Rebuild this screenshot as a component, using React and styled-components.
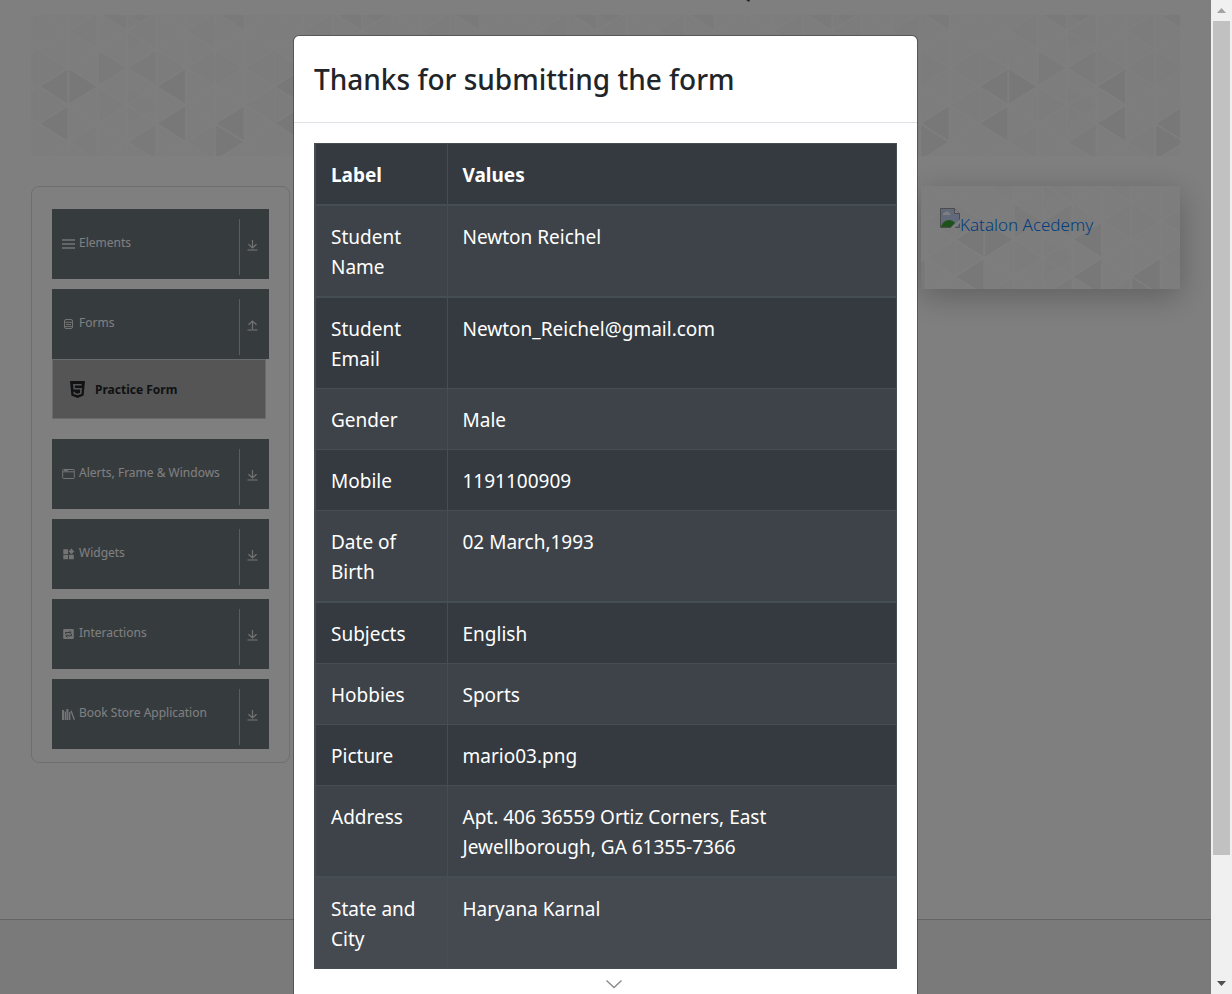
import React from "react";
import styled, { createGlobalStyle } from "styled-components";

const Global = createGlobalStyle`
  *, *::before, *::after { box-sizing: border-box; }
  html, body { margin: 0; }
  body { font-family: "Noto Sans", "Open Sans", sans-serif; font-size: 19px; line-height: 30px; color: #212529; overflow: hidden; }
`;

const Screen = styled.div`
  position: relative;
  display: flex;
  height: 100vh;
  overflow: hidden;
`;
const Viewport = styled.div`
  position: relative;
  flex: 1;
  min-width: 0;
  display: flex;
  flex-direction: column;
  overflow: hidden;
  background: #fff;
`;
const Main = styled.main`
  flex: 1;
  padding: 15px 31px 0;
`;
const Banner = styled.div`
  height: 141px;
  margin-bottom: 30px;
`;
const Columns = styled.div`
  display: flex;
  justify-content: space-between;
  align-items: flex-start;
`;
const Sidebar = styled.nav`
  width: 259px;
  padding: 22px 20px 13px;
  border: 1px solid #dedede;
  border-radius: 8px;
`;
const Group = styled.div`
  margin-bottom: ${(p) => (p.$open ? 20 : 10)}px;
  &:last-child { margin-bottom: 0; }
`;
const GroupButton = styled.button`
  display: flex;
  align-items: center;
  width: 100%;
  height: 70px;
  padding: 0 10px;
  border: 0;
  background: #6d767d;
  color: #fff;
  font: inherit;
  font-size: 12px;
  line-height: 20px;
  text-align: left;
`;
const GroupIcon = styled.span`
  display: flex;
  width: 13px;
  margin-right: 4px;
  color: #e6e6e6;
`;
const GroupText = styled.span`
  flex: 1;
  padding-bottom: 2px;
  white-space: nowrap;
`;
const Toggle = styled.span`
  display: flex;
  align-items: center;
  align-self: flex-end;
  height: 56px;
  margin-bottom: 4px;
  padding: 0 1px 4px 7px;
  border-left: 1px solid #b8b8b8;
  color: #e6e6e6;
`;
const SubItem = styled.a`
  display: flex;
  align-items: center;
  gap: 10px;
  width: 214px;
  height: 60px;
  padding: 1px 17px 0;
  border: 1px solid #d0d4d8;
  background: #aaa;
  color: #212529;
  font-size: 12px;
  font-weight: 700;
  text-decoration: none;
`;
const Ad = styled.aside`
  display: grid;
  width: 259px;
  height: 103px;
  box-shadow: 0 8px 30px rgba(0, 0, 0, 0.25);
  & > * { grid-area: 1 / 1; }
`;
const AdLink = styled.a`
  display: flex;
  align-items: flex-start;
  padding: 22px 19px;
  color: #007bff;
  font-size: 17px;
  font-weight: 300;
  text-decoration: none;
  z-index: 1;
`;
const AdText = styled.span`
  margin-top: 2px;
`;
const Footer = styled.footer`
  height: 75px;
  border-top: 1px solid #c8c8c8;
  background: #f5f5f5;
`;
const Backdrop = styled.div`
  position: absolute;
  inset: 0;
  z-index: 2;
  display: flex;
  justify-content: center;
  align-items: flex-start;
  padding-top: 35px;
  background: rgba(0, 0, 0, 0.5);
`;
const Dialog = styled.section`
  width: 625px;
  max-width: 100%;
  border: 1px solid rgba(0, 0, 0, 0.3);
  border-radius: 6px;
  background: #fff;
  background-clip: padding-box;
`;
const DialogHeader = styled.header`
  padding: 20px;
  border-bottom: 1px solid #dee2e6;
`;
const DialogTitle = styled.h1`
  margin: 0;
  font-size: 28px;
  font-weight: 500;
  line-height: 46px;
`;
const DialogBody = styled.div`
  padding: 20px 20px 60px;
`;
const Table = styled.table`
  width: 100%;
  table-layout: fixed;
  border-collapse: collapse;
  border: 1px solid #454d55;
  border-left-width: 2px;
  background: #343a40;
  color: #fff;
`;
const LabelCol = styled.col`
  width: 132px;
`;
const Cell = styled.td`
  padding: 16px 15px 14px;
  border: 1px solid #454d55;
  border-bottom-width: ${(p) => (p.$thick ? 2 : 1)}px;
  text-align: left;
  vertical-align: top;
  font-weight: 400;
`;
const HeadCell = styled(Cell)`
  font-weight: 700;
`;
const Row = styled.tr`
  background: ${(p) => (p.$last ? "#454950" : p.$striped ? "#3e4349" : "#343a40")};
`;
const Scrollbar = styled.div`
  display: flex;
  flex-direction: column;
  align-items: center;
  width: 21px;
  background: #f0f0f0;
`;
const ScrollArrow = styled.span`
  display: flex;
  align-items: center;
  justify-content: center;
  height: 21px;
`;
const Track = styled.div`
  flex: 1;
  width: 17px;
`;
const Thumb = styled.div`
  height: 87.6%;
  background: #c1c1c1;
`;
const MoreHint = styled.span`
  position: absolute;
  z-index: 3;
  left: 50%;
  bottom: 5px;
  margin-left: -10px;
  display: flex;
`;
const CutMark = styled.span`
  position: absolute;
  z-index: 3;
  left: 746px;
  top: 0;
  display: flex;
`;

const COL = 235 / 8;
// column, apex y, direction (-1 points left, 1 points right), fill
const TRIANGLES = [
  [0, 71, -1, 0], [1, 71, 1, 0], [0, 108, -1, 0], [4, 71, -1, 0], [4, 108, -1, 0],
  [6, 108, -1, 0], [6, 127, 1, 0], [3, 127, -1, 1], [2, 53, 1, 1], [3, 53, -1, 1],
  [0, 53, 1, 2], [4, 53, 1, 2], [3, 16, -1, 2], [3, 90, 1, 2], [1, 16, -1, 2],
  [2, -2, -1, 1], [3, -2, 1, 1], [6, -2, -1, 1], [3, 16, 1, 2], [2, 90, 1, 2],
  [5, 127, -1, 2], [7, 53, -1, 2], [7, 90, -1, 2], [5, 16, -1, 2],
  [0, 90, 1, 2], [6, 53, 1, 2], [5, 53, -1, 2], [1, 127, -1, 2],
];
const FILLS = ["#f0f0f0", "#f4f4f4", "#f9f9f9"];

function TrianglePattern({ id, x, y }) {
  const lines = [];
  for (let k = 0; k < 8; k++) {
    lines.push(`M${k * COL} -40V190`);
    for (let m = -1; m < 5; m++) {
      const a = 34.5 + 37 * (m - 1);
      const b = a - 18.5;
      const odd = k % 2;
      const s = odd ? b : a;
      const e = odd ? a : b;
      lines.push(`M${k * COL} ${s}L${(k + 1) * COL} ${e}`);
      lines.push(`M${k * COL} ${s}L${(k + 1) * COL} ${odd ? e - 37 : e + 37}`);
    }
  }
  return (
    <svg width="100%" height="100%" aria-hidden="true" display="block">
      <defs>
        <pattern id={id} width="235" height="148" patternUnits="userSpaceOnUse" patternTransform={`translate(${x} ${y})`}>
          <rect width="235" height="148" fill="#fbfbfb" />
          {TRIANGLES.map(([k, ty, dir, f], i) => {
            const l = k * COL;
            const r = l + COL;
            const tip = dir < 0 ? l : r;
            const base = dir < 0 ? r : l;
            return <path key={i} d={`M${tip} ${ty + 0.5}L${base} ${ty - 18}V${ty + 19}Z`} fill={FILLS[f]} />;
          })}
          <path d={lines.join("")} stroke="#fdfdfd" strokeWidth="2" fill="none" />
        </pattern>
      </defs>
      <rect width="100%" height="100%" fill={`url(#${id})`} />
    </svg>
  );
}

const ICONS = {
  elements: <path d="M0 3h13M0 7h13M0 11h13" stroke="currentColor" strokeWidth="1.4" />,
  forms: (
    <g fill="none" stroke="currentColor">
      <rect x="2.5" y="2.5" width="8" height="9" rx="1.5" />
      <path d="M3 5.3h7M4 7.5h5M3 9.6h7" />
    </g>
  ),
  alerts: (
    <g fill="none" stroke="currentColor">
      <rect x="0.7" y="2.5" width="11.6" height="9" rx="0.8" />
      <path d="M1 4.8h11M2 3.6h4" />
    </g>
  ),
  widgets: (
    <path d="M1.3 2.3h4.8v4.6H1.3zM1.3 7.7h4.8v4.6H1.3zM7 7.7h4.8v4.6H7zM9.4 1.5l2.8 2.9-2.8 2.9-2.8-2.9z" fill="currentColor" />
  ),
  interactions: (
    <g>
      <rect x="1.2" y="2" width="10.6" height="10" rx="1" fill="currentColor" />
      <path d="M3.5 7V5.5h5M7.5 4 9.2 5.5 7.5 7M9.5 7v1.8h-5M5.5 7.3 3.8 8.8l1.7 1.5" fill="none" stroke="#6d767d" strokeWidth="1" />
    </g>
  ),
  books: (
    <path d="M0 3h2v10H0zM2.6 4.5h1.4V13H2.6zM4.4 2h2v11h-2zM7 5h1.4v8H7zM8.4 4l1.3-.5 3.3 9-1.3.5z" fill="currentColor" />
  ),
};

function Arrow({ up }) {
  return (
    <svg width="11" height="12" viewBox="0 0 11 12" fill="none" stroke="currentColor" aria-hidden="true">
      <path d={up ? "M5.5 10V2M1.5 5.8 5.5 2l4 3.8" : "M5.5 1v8M1.5 5.2l4 3.8 4-3.8"} strokeWidth="1.2" />
      <path d="M0.5 11h10" strokeWidth="1.6" opacity="0.7" />
    </svg>
  );
}

const GROUPS = [
  { icon: "elements", label: "Elements" },
  { icon: "forms", label: "Forms", open: true },
  { icon: "alerts", label: "Alerts, Frame & Windows" },
  { icon: "widgets", label: "Widgets" },
  { icon: "interactions", label: "Interactions" },
  { icon: "books", label: "Book Store Application" },
];

const VALUES = [
  ["Student Name", "Newton Reichel"],
  ["Student Email", "Newton_Reichel@gmail.com"],
  ["Gender", "Male"],
  ["Mobile", "1191100909"],
  ["Date of Birth", "02 March,1993"],
  ["Subjects", "English"],
  ["Hobbies", "Sports"],
  ["Picture", "mario03.png"],
  ["Address", "Apt. 406 36559 Ortiz Corners, East Jewellborough, GA 61355-7366"],
  ["State and City", "Haryana Karnal"],
];

export default function App() {
  return (
    <Screen>
      <Global />
      <Viewport>
        <Main>
          <Banner><TrianglePattern id="banner" x={8} y={0} /></Banner>
          <Columns>
            <Sidebar>
              {GROUPS.map((g) => (
                <Group key={g.label} $open={g.open}>
                  <GroupButton type="button" aria-expanded={!!g.open}>
                    <GroupIcon>
                      <svg width="13" height="14" viewBox="0 0 13 14" aria-hidden="true">{ICONS[g.icon]}</svg>
                    </GroupIcon>
                    <GroupText>{g.label}</GroupText>
                    <Toggle><Arrow up={g.open} /></Toggle>
                  </GroupButton>
                  {g.open && (
                    <SubItem href="#practice-form">
                      <svg width="15" height="17" viewBox="0 0 15 17" aria-hidden="true">
                        <path d="M0 0h15l-1.4 14.6L7.5 17l-6.1-2.4z" fill="#212529" />
                        <path d="M11.6 3.8H3.9l.3 4h6.9l-.4 4.6-3.2 1-3.2-1-.1-1.7" fill="none" stroke="#aaa" strokeWidth="1.6" />
                      </svg>
                      Practice Form
                    </SubItem>
                  )}
                </Group>
              ))}
            </Sidebar>
            <Ad>
              <TrianglePattern id="ad" x={34} y={-18} />
              <AdLink href="#katalon">
                <svg width="20" height="20" viewBox="0 0 20 20" aria-hidden="true">
                  <path d="M.5.5h14l5 5v14H.5z" fill="#c3d3f5" stroke="#999" />
                  <path d="M14.5.5v5h5" fill="#fff" stroke="#999" />
                  <path d="M3 6.5a2 2 0 0 1 2-2 2.5 2.5 0 0 1 4.5 1 1.5 1.5 0 0 1 1 1.5H3z" fill="#fff" />
                  <path d="M1 19c1-4 4-7 8-7 3 0 5 1.5 6 3l-4 4z" fill="#3fa535" />
                  <path d="M10.5 20 20 11.5V15l-5.5 5z" fill="#fafafa" />
                </svg>
                <AdText>Katalon Acedemy</AdText>
              </AdLink>
            </Ad>
          </Columns>
        </Main>
        <Footer />
        <Backdrop>
          <Dialog role="dialog" aria-modal="true" aria-labelledby="dialog-title">
            <DialogHeader><DialogTitle id="dialog-title">Thanks for submitting the form</DialogTitle></DialogHeader>
            <DialogBody>
              <Table>
                <colgroup><LabelCol /><col /></colgroup>
                <thead>
                  <tr>
                    <HeadCell as="th" scope="col" $thick>Label</HeadCell>
                    <HeadCell as="th" scope="col" $thick>Values</HeadCell>
                  </tr>
                </thead>
                <tbody>
                  {VALUES.map(([label, value], i) => (
                    <Row key={label} $striped={i % 2 === 0} $last={i === VALUES.length - 1}>
                      <Cell $thick={i % 4 === 0}>{label}</Cell>
                      <Cell $thick={i % 4 === 0}>{value}</Cell>
                    </Row>
                  ))}
                </tbody>
              </Table>
            </DialogBody>
          </Dialog>
        </Backdrop>
      </Viewport>
      <Scrollbar aria-hidden="true">
        <ScrollArrow><svg width="9" height="5"><path d="M0 5 4.5 0 9 5z" fill="#a3a3a3" /></svg></ScrollArrow>
        <Track><Thumb /></Track>
        <ScrollArrow><svg width="9" height="5"><path d="M0 0h9L4.5 5z" fill="#505050" /></svg></ScrollArrow>
      </Scrollbar>
      <CutMark aria-hidden="true"><svg width="6" height="3"><path d="M0 0h4l-1 2z" fill="#212529" /></svg></CutMark>
      <MoreHint aria-hidden="true">
        <svg width="16" height="9" fill="none" stroke="#888" strokeWidth="1.3"><path d="M.5.5 8 7.5 15.5.5" /></svg>
      </MoreHint>
    </Screen>
  );
}
